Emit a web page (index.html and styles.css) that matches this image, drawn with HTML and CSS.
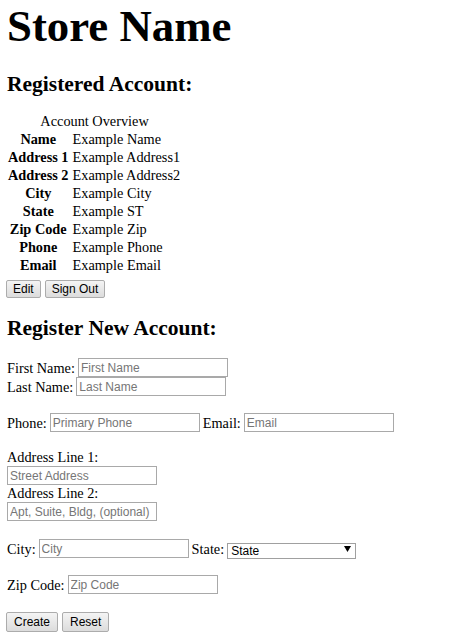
FILE: index.html
```html
<!DOCTYPE html>
<html>
<head>
<meta charset="utf-8">
<title>Store Name</title>
<link rel="stylesheet" href="styles.css">
</head>
<body>
<h1 class="title">Store Name</h1>
<h2 class="section first">Registered Account:</h2>
<table class="overview">
  <caption>Account Overview</caption>
  <tr><th>Name</th><td>Example Name</td></tr>
  <tr><th>Address 1</th><td>Example Address1</td></tr>
  <tr><th>Address 2</th><td>Example Address2</td></tr>
  <tr><th>City</th><td>Example City</td></tr>
  <tr><th>State</th><td>Example ST</td></tr>
  <tr><th>Zip Code</th><td>Example Zip</td></tr>
  <tr><th>Phone</th><td>Example Phone</td></tr>
  <tr><th>Email</th><td>Example Email</td></tr>
</table>
<div class="actions small">
  <button class="btn">Edit</button>
  <button class="btn">Sign Out</button>
</div>
<h2 class="section second">Register New Account:</h2>
<form class="reg">
  <div class="group">
    <div class="row"><label>First Name:</label><input class="field" placeholder="First Name"></div>
    <div class="row"><label>Last Name:</label><input class="field" placeholder="Last Name"></div>
  </div>
  <div class="group">
    <div class="row"><label>Phone:</label><input class="field" placeholder="Primary Phone"><label class="after">Email:</label><input class="field" placeholder="Email"></div>
  </div>
  <div class="group">
    <div class="label-line">Address Line 1:</div>
    <div class="row"><input class="field" placeholder="Street Address"></div>
    <div class="label-line">Address Line 2:</div>
    <div class="row"><input class="field" placeholder="Apt, Suite, Bldg, (optional)"></div>
  </div>
  <div class="group wide">
    <div class="row"><label>City:</label><input class="field" placeholder="City"><label class="after">State:</label>
      <span class="select-wrap"><select class="select"><option>State</option></select><svg class="arrow" width="7" height="6" viewBox="0 0 7 6"><path d="M0 0H7L3.5 6Z" fill="#000"/></svg></span>
    </div>
  </div>
  <div class="group">
    <div class="row"><label>Zip Code:</label><input class="field" placeholder="Zip Code"></div>
  </div>
  <div class="group actions">
    <button type="button" class="btn big">Create</button>
    <button type="reset" class="btn big">Reset</button>
  </div>
</form>
</body>
</html>
```
FILE: styles.css
```css
html, body {
  margin: 0;
  padding: 0;
  background: #fff;
}
body {
  padding: 0 7px;
  font-family: "Liberation Serif", "Times New Roman", serif;
  font-size: 14.3px;
  line-height: 18px;
  color: #000;
}
.title {
  margin: 1px 0 0 0;
  font-size: 44.8px;
  line-height: 50px;
  font-weight: bold;
}
.section {
  margin: 0;
  font-size: 21.5px;
  line-height: 26px;
  font-weight: bold;
}
.section.first {
  margin-top: 20px;
}
.section.second {
  margin-top: 17px;
}
.overview {
  margin-top: 15px;
  border-collapse: separate;
  border-spacing: 0;
}
.overview caption {
  line-height: 18px;
}
.overview th, .overview td {
  padding: 0 2px 0 0;
  line-height: 18px;
}
.overview th {
  text-align: center;
  padding-right: 4px;
  padding-left: 1px;
}
.overview td {
  text-align: left;
}
.actions {
  display: flex;
  gap: 4px;
  margin-left: -1px;
}
.actions.small {
  margin-top: 6px;
}
.btn {
  font-family: "Liberation Sans", Arial, sans-serif;
  font-size: 12px;
  color: #000;
  background: linear-gradient(#f4f4f4, #dcdcdc);
  border: 1px solid #acacac;
  border-radius: 2px;
  padding: 0 6px;
  margin: 0;
  height: 18px;
  line-height: 14px;
}
.btn.big {
  height: 20px;
  padding: 0 7px;
}
.reg {
  margin: 0;
}
.group {
  margin-top: 17px;
}
.group.wide,
.group.actions {
  margin-top: 18px;
}
.row {
  display: flex;
  align-items: center;
  height: 19px;
  gap: 3px;
}
.label-line {
  height: 17px;
  line-height: 17px;
}
.field {
  box-sizing: border-box;
  width: 150px;
  height: 19px;
  margin: 0;
  padding: 0 2px;
  border: 1px solid #a9a9a9;
  font-family: "Liberation Sans", Arial, sans-serif;
  font-size: 12px;
  color: #000;
  background: #fff;
}
.field::placeholder {
  color: #767676;
}
.select-wrap {
  position: relative;
  display: inline-block;
  height: 16px;
}
.select {
  appearance: none;
  -webkit-appearance: none;
  box-sizing: border-box;
  width: 129px;
  height: 16px;
  margin: 0;
  padding: 0 3px;
  border: 1px solid #a0a0a0;
  border-radius: 0;
  background: #fff;
  font-family: "Liberation Sans", Arial, sans-serif;
  font-size: 12px;
  line-height: 14px;
  color: #000;
}
.arrow {
  position: absolute;
  right: 5px;
  top: 5px;
  pointer-events: none;
}
```
